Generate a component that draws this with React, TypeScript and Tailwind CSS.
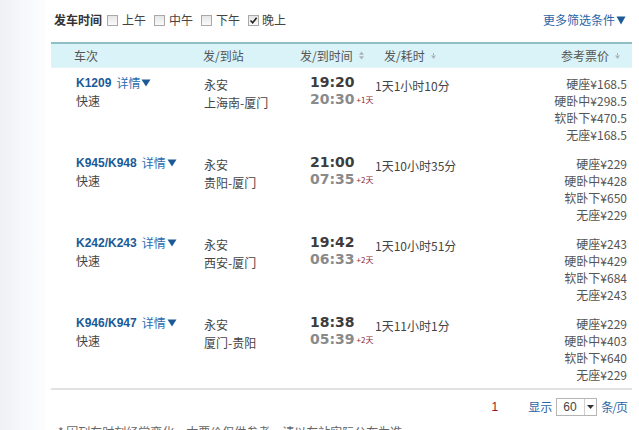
import React from 'react';

type Train = {
  code: string;
  from: string;
  route: string;
  dep: string;
  arr: string;
  days: string;
  duration: string;
  prices: string[];
};

const trains: Train[] = [
  {
    code: 'K1209',
    from: '永安',
    route: '上海南-厦门',
    dep: '19:20',
    arr: '20:30',
    days: '+1天',
    duration: '1天1小时10分',
    prices: ['硬座¥168.5', '硬卧中¥298.5', '软卧下¥470.5', '无座¥168.5'],
  },
  {
    code: 'K945/K948',
    from: '永安',
    route: '贵阳-厦门',
    dep: '21:00',
    arr: '07:35',
    days: '+2天',
    duration: '1天10小时35分',
    prices: ['硬座¥229', '硬卧中¥428', '软卧下¥650', '无座¥229'],
  },
  {
    code: 'K242/K243',
    from: '永安',
    route: '西安-厦门',
    dep: '19:42',
    arr: '06:33',
    days: '+2天',
    duration: '1天10小时51分',
    prices: ['硬座¥243', '硬卧中¥429', '软卧下¥684', '无座¥243'],
  },
  {
    code: 'K946/K947',
    from: '永安',
    route: '厦门-贵阳',
    dep: '18:38',
    arr: '05:39',
    days: '+2天',
    duration: '1天11小时1分',
    prices: ['硬座¥229', '硬卧中¥403', '软卧下¥640', '无座¥229'],
  },
];

const cjk = "font-['Noto_Sans_CJK_SC',sans-serif]";

function Checkbox({ checked }: { checked?: boolean }) {
  return (
    <span className="flex h-[11px] w-[11px] items-center justify-center border border-[#a9a9a9] bg-gradient-to-b from-[#e6e6e6] to-[#fafafa]">
      {checked && (
        <svg width="9" height="9" viewBox="0 0 9 9">
          <path d="M1.5 4.5 L3.7 6.8 L7.6 1.8" stroke="#222" strokeWidth="1.6" fill="none" />
        </svg>
      )}
    </span>
  );
}

function SortBoth() {
  return (
    <svg width="7" height="9" viewBox="0 0 7 9" className="ml-[5px]">
      <path d="M3.5 0.5 L6 3.8 L1 3.8 Z M3.5 8.5 L6 5.2 L1 5.2 Z" fill="#a9b4b8" />
    </svg>
  );
}

function SortDown() {
  return (
    <svg width="7" height="9" viewBox="0 0 7 9" className="ml-[5px]">
      <path d="M3 2 L4 2 L4 5 L3 5 Z M3.5 8 L6 4.6 L1 4.6 Z" fill="#a9b4b8" />
    </svg>
  );
}

function TrainRow({ t }: { t: Train }) {
  return (
    <div className="flex h-[80px] pt-[6px] text-[12px] leading-[18px]">
      <div className="w-[149px] pl-[25px]">
        <div className="flex items-center">
          <span className="font-['Liberation_Sans',sans-serif] text-[12px] font-bold text-[#1c5a96]">
            {t.code}
          </span>
          <span className={`ml-[5px] text-[#2a6bb0] ${cjk}`}>详情</span>
          <svg width="10" height="8" viewBox="0 0 10 8" className="ml-[1px]">
            <path d="M0.5 0.5 L9.5 0.5 L5 7.5 Z" fill="#1c5a96" />
          </svg>
        </div>
        <div className={`text-[#444] ${cjk}`}>快速</div>
      </div>
      <div className={`w-[97px] pl-[4px] pt-[2px] text-[#444] ${cjk}`}>
        <div>{t.from}</div>
        <div>{t.route}</div>
      </div>
      <div className="w-[75px] whitespace-nowrap pl-[13px] font-['DejaVu_Sans',sans-serif] text-[14px] font-bold leading-[17px]">
        <div className="text-[#3c3c3c]">{t.dep}</div>
        <div className="flex items-center text-[#8a8a8a]">
          {t.arr}
          <span className={`ml-[2px] text-[8px] font-normal leading-none text-[#8b1c3a] ${cjk}`}>{t.days}</span>
        </div>
      </div>
      <div className={`w-[98px] whitespace-nowrap pl-[3px] pt-[3px] text-[#444] ${cjk}`}>{t.duration}</div>
      <div className={`flex-1 pr-[5px] pt-[1px] text-right leading-[17px] text-[#555] ${cjk}`}>
        {t.prices.map((p) => (
          <div key={p}>{p}</div>
        ))}
      </div>
    </div>
  );
}

export default function App() {
  return (
    <div className={`flex h-[430px] w-[639px] overflow-hidden bg-white text-[12px] ${cjk}`}>
      <div className="w-[46px] shrink-0 bg-gradient-to-r from-[#eef1f5] via-[#f6f8fa] to-[#fdfdfe]" />

      <div className="ml-[5px] w-[581px] shrink-0">
        <div className="flex h-[42px] items-center pb-[2px] pl-[3px]">
          <span className="font-bold text-[#333]">发车时间</span>
          <div className="ml-[5px] flex items-center gap-[4px]">
            <Checkbox />
            <span className="text-[#444]">上午</span>
          </div>
          <div className="ml-[8px] flex items-center gap-[4px]">
            <Checkbox />
            <span className="text-[#444]">中午</span>
          </div>
          <div className="ml-[8px] flex items-center gap-[4px]">
            <Checkbox />
            <span className="text-[#444]">下午</span>
          </div>
          <div className="ml-[8px] flex items-center gap-[3px]">
            <Checkbox checked />
            <span className="text-[#444]">晚上</span>
          </div>
          <div className="ml-auto mr-[6px] flex items-center text-[#2a65a8]">
            更多筛选条件
            <svg width="10" height="9" viewBox="0 0 10 9" className="ml-[1px]">
              <path d="M0.5 0.5 L9.5 0.5 L5 8.5 Z" fill="#1c5a96" />
            </svg>
          </div>
        </div>

        <div className="flex h-[26px] items-center border-t-2 border-b border-t-[#8fbfc4] border-b-[#e3f3f6] bg-[#d9f3f8] text-[12px] text-[#555]">
          <div className="w-[149px] pl-[23px]">车次</div>
          <div className="w-[97px] pl-[3px]">发/到站</div>
          <div className="flex w-[75px] items-center whitespace-nowrap pl-[3px]">
            发/到时间
            <SortBoth />
          </div>
          <div className="flex w-[98px] items-center pl-[12px]">
            发/耗时
            <SortDown />
          </div>
          <div className="flex flex-1 items-center justify-end pr-[11px]">
            参考票价
            <SortDown />
          </div>
        </div>

        <div className="border-b-2 border-b-[#e2e2e2]">
          {trains.map((t) => (
            <TrainRow key={t.code} t={t} />
          ))}
        </div>

        <div className="flex h-[34px] items-center justify-end pr-[5px]">
          <span className="mr-[30px] font-['Liberation_Sans',sans-serif] text-[12px] text-[#a0102a]">1</span>
          <span className="text-[#2a65a8]">显示</span>
          <div className="ml-[4px] flex h-[18px] w-[41px] items-center border border-[#b5b5b5] bg-white">
            <span className="flex-1 pl-[6px] font-['Liberation_Sans',sans-serif] text-[12px] text-[#444]">60</span>
            <div className="flex h-full w-[12px] items-center justify-center border-l border-[#cfcfcf]">
              <svg width="7" height="4" viewBox="0 0 7 4">
                <path d="M0 0 L7 0 L3.5 4 Z" fill="#333" />
              </svg>
            </div>
          </div>
          <span className="ml-[4px] tracking-[-1px] text-[#2a65a8]">条/页</span>
        </div>

        <div className="pl-[7px] text-[12px] leading-[16px] text-[#666]">
          * 因列车时刻经常变化，本票价仅供参考，请以车站实际公布为准。
        </div>
      </div>
    </div>
  );
}
